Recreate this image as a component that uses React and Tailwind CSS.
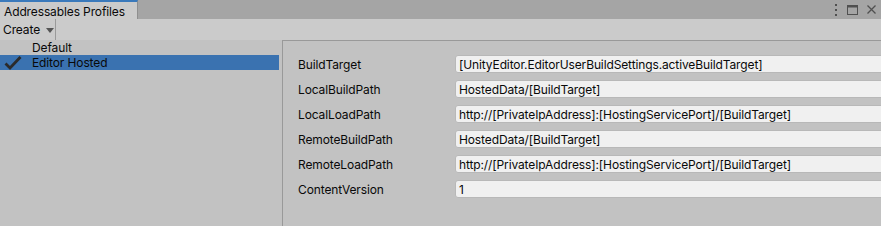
import React from 'react';

const rows = [
    { label: 'BuildTarget', value: '[UnityEditor.EditorUserBuildSettings.activeBuildTarget]' },
    { label: 'LocalBuildPath', value: 'HostedData/[BuildTarget]' },
    { label: 'LocalLoadPath', value: 'http://[PrivateIpAddress]:[HostingServicePort]/[BuildTarget]' },
    { label: 'RemoteBuildPath', value: 'HostedData/[BuildTarget]' },
    { label: 'RemoteLoadPath', value: 'http://[PrivateIpAddress]:[HostingServicePort]/[BuildTarget]' },
    { label: 'ContentVersion', value: '1' },
];

const profiles = [
    { name: 'Default', active: false },
    { name: 'Editor Hosted', active: true },
];

const Check = () => (
    <svg width="18" height="14" viewBox="0 0 18 14" className="shrink-0">
        <path d="M1.5 7.5 L6 12 L16.5 1" fill="none" stroke="#2b2b2b" strokeWidth="2.8" strokeLinejoin="miter" />
    </svg>
);

export default function App() {
    return (
        <div
            className="w-[881px] h-[226px] overflow-hidden bg-[#c2c2c2] text-[12px] leading-none tracking-[-0.12px] text-[#090909] flex flex-col"
            style={{ fontFamily: 'Inter, "Noto Sans", sans-serif' }}
        >
            {/* Tab strip */}
            <div className="h-[19px] bg-[#a5a5a5] flex items-stretch shrink-0">
                <div className="w-[138px] bg-[#cbcbcb] border-t-2 border-[#3a79bb] border-r border-r-[#8f8f8f] flex items-center pl-[4px] pt-[2px]">
                    Addressables Profiles
                </div>
                <div className="flex-1" />
                <div className="flex items-center gap-[9px] pr-[5px]">
                    <svg width="4" height="12" viewBox="0 0 4 12">
                        <rect x="1" y="0" width="2" height="2" fill="#505050" />
                        <rect x="1" y="5" width="2" height="2" fill="#505050" />
                        <rect x="1" y="10" width="2" height="2" fill="#505050" />
                    </svg>
                    <svg width="11" height="10" viewBox="0 0 11 10">
                        <rect x="0.5" y="0.5" width="10" height="9" fill="none" stroke="#505050" />
                        <rect x="0.5" y="0.5" width="10" height="2" fill="#505050" />
                    </svg>
                    <svg width="9" height="9" viewBox="0 0 9 9">
                        <path d="M0.5 0.5 L8.5 8.5 M8.5 0.5 L0.5 8.5" stroke="#505050" strokeWidth="1.3" />
                    </svg>
                </div>
            </div>

            {/* Toolbar */}
            <div className="h-[21px] bg-[#cbcbcb] flex items-stretch shrink-0">
                <div className="w-[56px] border-r border-[#9a9a9a] flex items-center pl-[3px] pt-[1px] gap-[6px]">
                    <span>Create</span>
                    <svg width="8" height="5" viewBox="0 0 8 5">
                        <path d="M0 0 L8 0 L4 5 Z" fill="#555555" />
                    </svg>
                </div>
            </div>

            {/* Body */}
            <div className="flex-1 flex">
                <div className="w-[279px] flex flex-col">
                    {profiles.map((p) => (
                        <div
                            key={p.name}
                            className={`h-[15px] flex items-center pt-[1px] ${p.active ? 'bg-[#3a72b0]' : ''}`}
                        >
                            <div className="w-[32px] flex items-center pl-[4px]">
                                {p.active && <Check />}
                            </div>
                            <span>{p.name}</span>
                        </div>
                    ))}
                </div>

                <div className="flex-1 ml-[3px] border-l border-t border-[#999999] pt-[14px] pl-[15px] flex flex-col gap-[7px] overflow-hidden">
                    {rows.map((r) => (
                        <div key={r.label} className="flex items-center h-[18px]">
                            <div className="w-[157px] shrink-0 pt-[1px]">{r.label}</div>
                            <div className="w-[440px] shrink-0 h-[18px] bg-[#f0f0f0] border border-[#b8b8b8] rounded-[3px] flex items-center pl-[3px] pt-[1px]">
                                {r.value}
                            </div>
                        </div>
                    ))}
                </div>
            </div>
        </div>
    );
}
